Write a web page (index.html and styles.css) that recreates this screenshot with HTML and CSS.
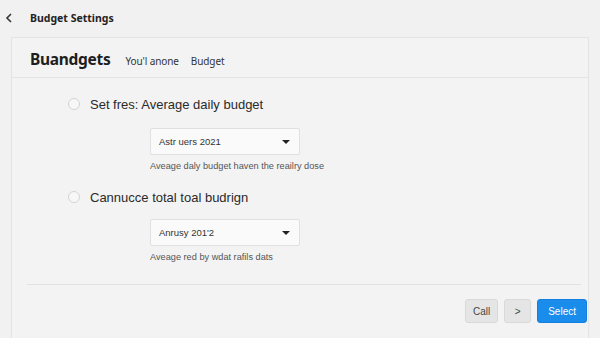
FILE: index.html
```html
<!DOCTYPE html>
<html>
<head>
<meta charset="utf-8">
<link rel="stylesheet" href="styles.css">
</head>
<body>
<div class="topbar">
  <svg class="back" width="8" height="10" viewBox="0 0 8 10"><path d="M6 1 L2 5 L6 9" fill="none" stroke="#333" stroke-width="1.6"/></svg>
  <span class="title">Budget Settings</span>
</div>
<div class="card">
  <div class="card-head">
    <span class="h1">Buandgets</span>
    <span class="tab">You'l anone</span>
    <span class="tab">Budget</span>
  </div>
  <div class="options">
    <div class="option">
      <div class="opt-row"><span class="radio"></span><span class="opt-label">Set fres: Average daily budget</span></div>
      <div class="select"><span>Astr uers 2021</span><span class="caret"></span></div>
      <div class="help">Aveage daly budget haven the reailry dose</div>
    </div>
    <div class="option second">
      <div class="opt-row"><span class="radio"></span><span class="opt-label">Cannucce total toal budrign</span></div>
      <div class="select"><span>Anrusy 201'2</span><span class="caret"></span></div>
      <div class="help">Aveage red by wdat rafils dats</div>
    </div>
  </div>
  <div class="divider"></div>
  <div class="footer">
    <button class="btn">Call</button>
    <button class="btn">&gt;</button>
    <button class="btn primary">Select</button>
  </div>
</div>
</body>
</html>
```
FILE: styles.css
```css
html, body { margin: 0; padding: 0; }
body {
  background: #f1f1f1;
  font-family: "Liberation Sans", Arial, sans-serif;
  color: #222;
  width: 600px;
  height: 338px;
  overflow: hidden;
}
.topbar {
  height: 36px;
  display: flex;
  align-items: center;
  padding-left: 5px;
}
.back { margin-top: -1px; }
.title {
  margin-left: 17px;
  font-family: "Noto Sans", sans-serif;
  font-weight: 700;
  font-size: 10.5px;
  color: #222;
}
.card {
  margin: 1px 11px 0 11px;
  border: 1px solid #e4e4e4;
  border-bottom: none;
  background: #f3f3f3;
  height: 301px;
}
.card-head {
  height: 40px;
  display: flex;
  align-items: baseline;
  padding-left: 18px;
  border-bottom: 1px solid #e4e4e4;
  box-sizing: border-box;
  padding-top: 10px;
}
.h1 {
  font-family: "Noto Sans", sans-serif;
  font-weight: 700;
  font-size: 15.5px;
  color: #1e1e1e;
  letter-spacing: -0.3px;
}
.tab {
  font-family: "Noto Sans", sans-serif;
  font-size: 10px;
  color: #333;
  margin-left: 15px;
  letter-spacing: -0.1px;
}
.tab + .tab { margin-left: 12px; }
.options {
  box-sizing: border-box;
  padding-left: 56px;
  padding-top: 18px;
  height: 206px;
}
.option.second { margin-top: 18px; }
.opt-row {
  display: flex;
  align-items: center;
  height: 16px;
}
.radio {
  width: 10px;
  height: 10px;
  border: 1px solid #d4d4d4;
  border-radius: 50%;
  background: #f7f7f7;
}
.opt-label {
  margin-left: 10px;
  font-size: 13px;
  color: #2a2a2a;
}
.select {
  margin: 16px 0 0 82px;
  width: 150px;
  height: 27px;
  box-sizing: border-box;
  border: 1px solid #e0e0e0;
  border-radius: 2px;
  background: #fafafa;
  display: flex;
  align-items: center;
  justify-content: space-between;
  padding: 0 8px 0 8px;
  font-size: 9.5px;
  color: #333;
}
.second .select { margin-top: 14px; }
.caret {
  width: 0;
  height: 0;
  border-left: 4px solid transparent;
  border-right: 4px solid transparent;
  border-top: 4px solid #222;
  margin-right: 1px;
}
.help {
  margin: 6px 0 0 82px;
  font-size: 9.2px;
  color: #555;
}
.divider {
  margin: 0 7px 0 15px;
  border-top: 1px solid #e2e2e2;
}
.footer {
  display: flex;
  justify-content: flex-end;
  gap: 6px;
  padding-top: 14px;
  padding-right: 1px;
}
.btn {
  height: 24px;
  font-family: "Liberation Sans", Arial, sans-serif;
  font-size: 10px;
  color: #444;
  background: #e5e5e5;
  border: 1px solid #d9d9d9;
  border-radius: 3px;
  padding: 0 7px;
  min-width: 27px;
}
.btn.primary {
  background: #1a8cec;
  border-color: #1580e0;
  color: #fff;
  padding: 0 10px;
  min-width: 49px;
}
```
